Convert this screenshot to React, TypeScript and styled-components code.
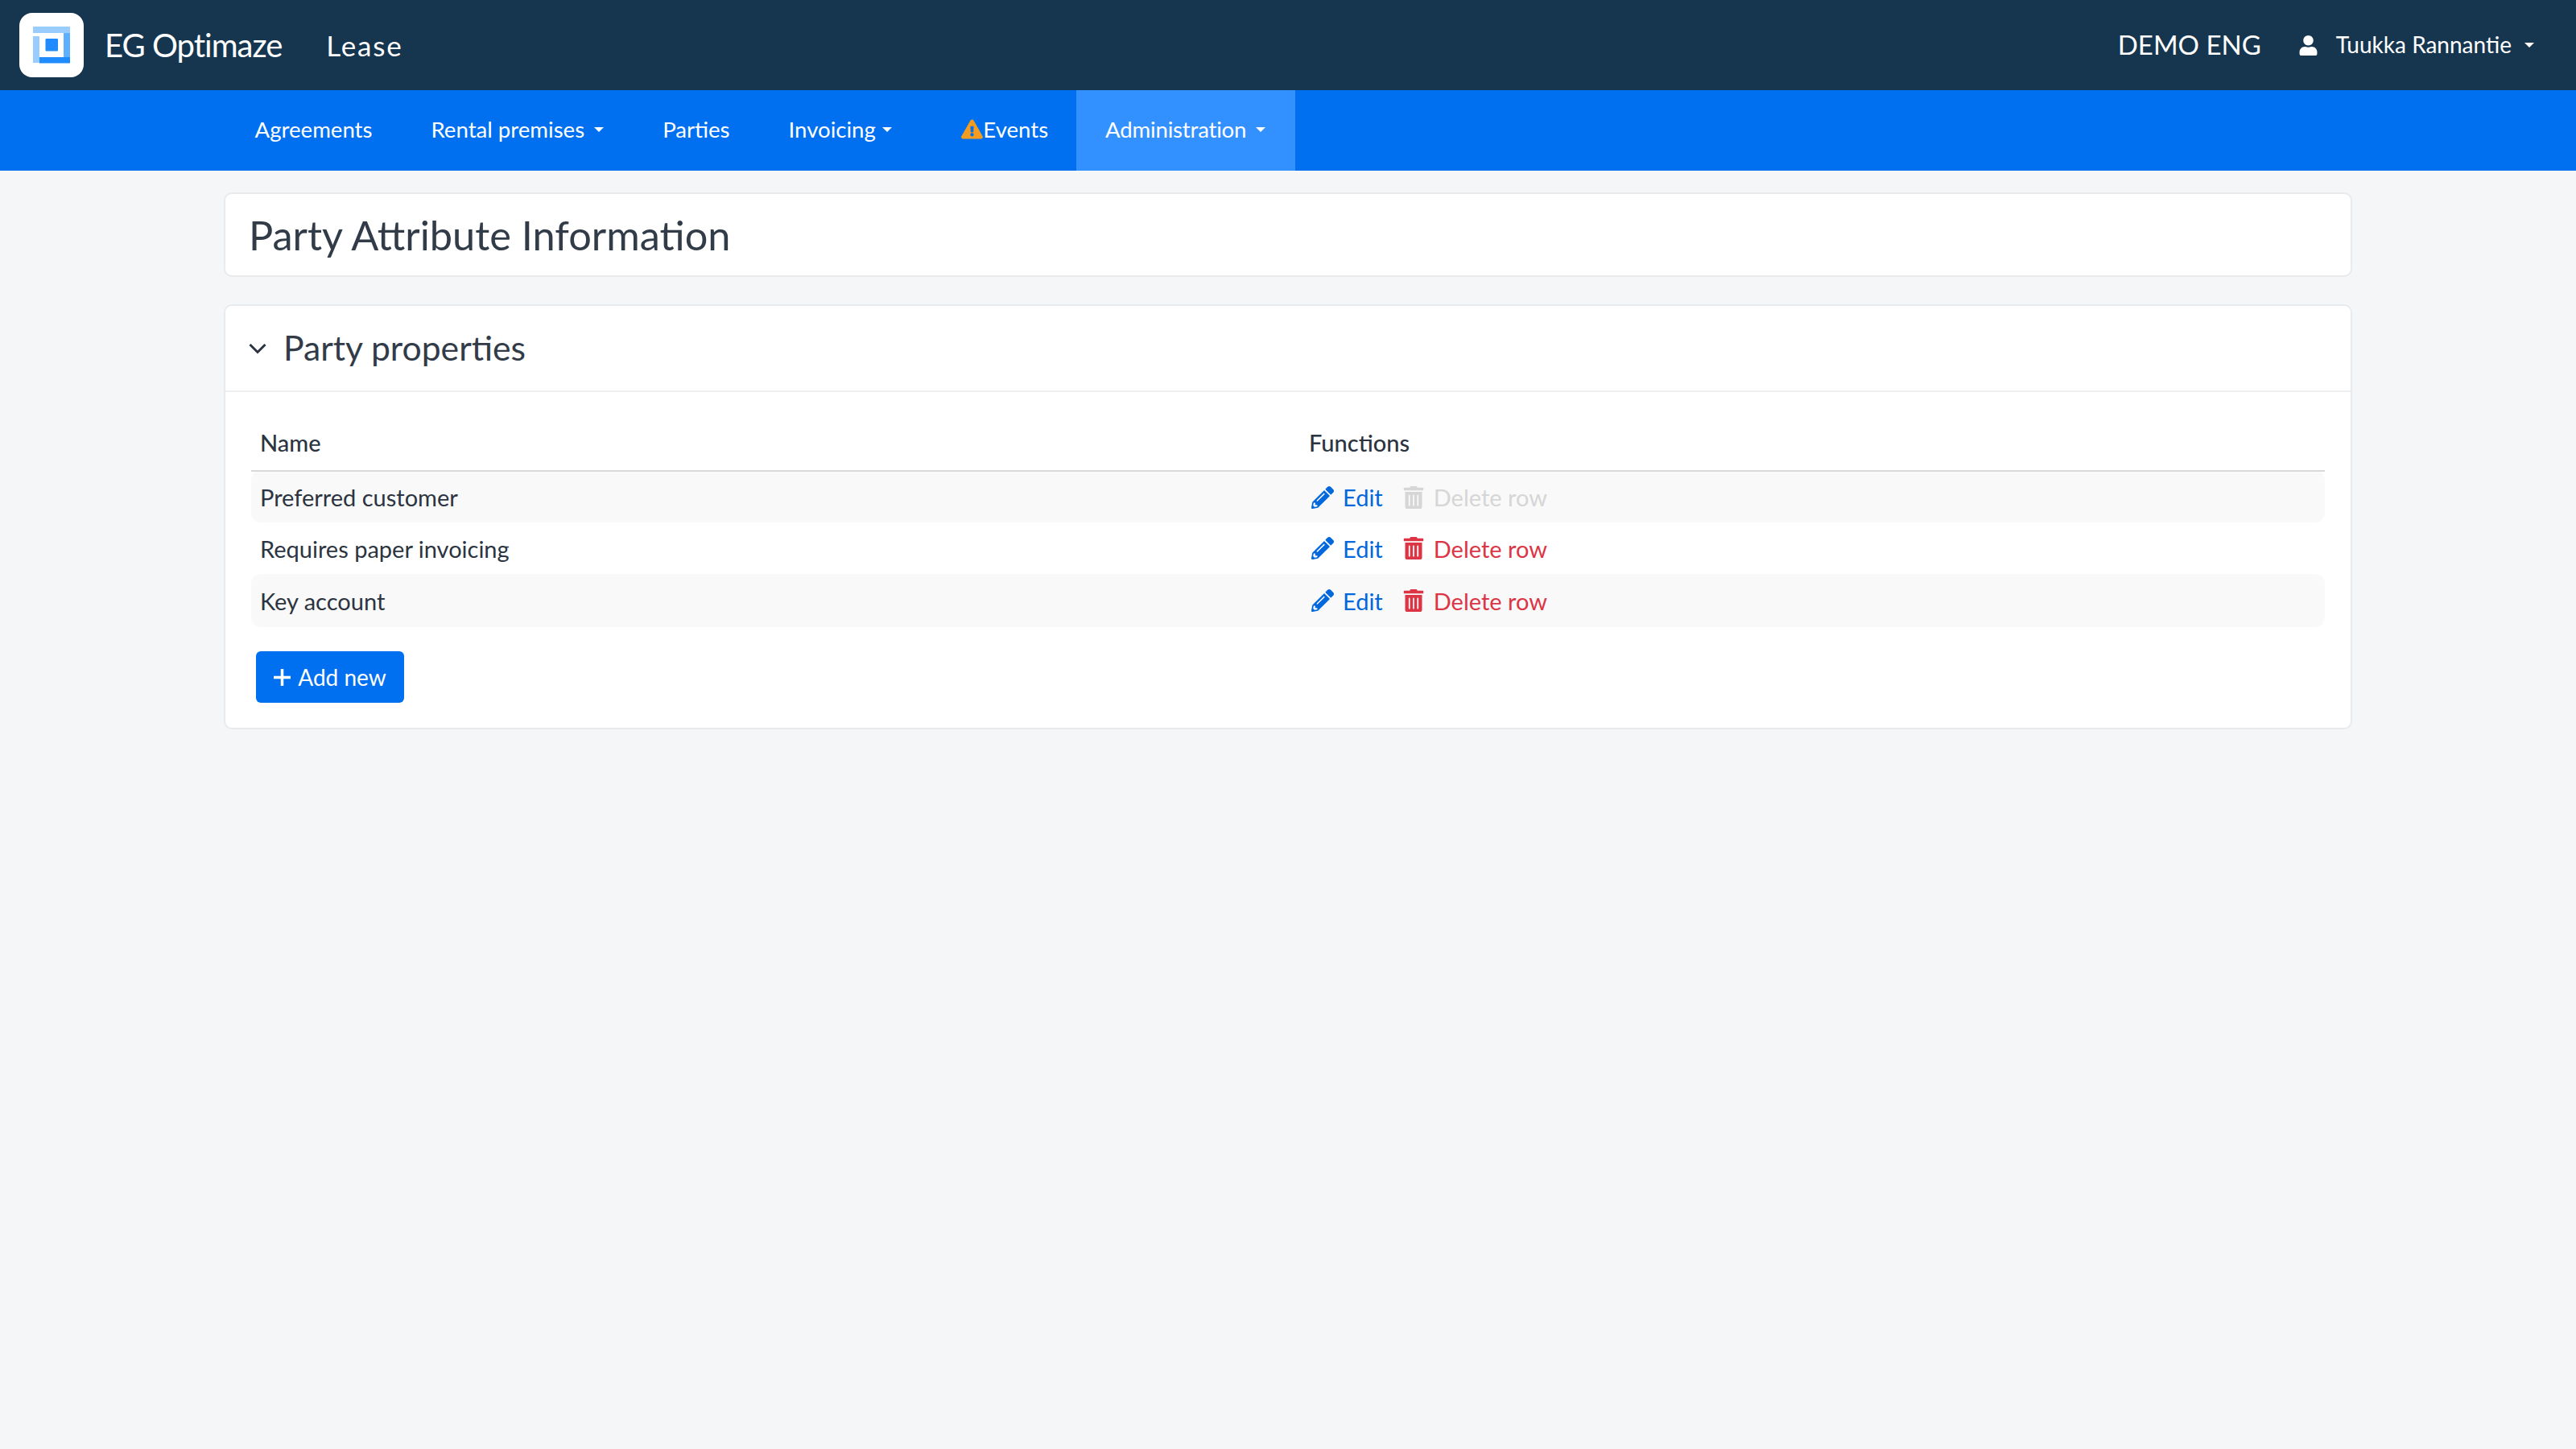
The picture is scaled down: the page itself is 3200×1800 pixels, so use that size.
import React from "react";
import styled, { createGlobalStyle } from "styled-components";
import { FaExclamationTriangle, FaPencilAlt, FaTrashAlt, FaUser } from "react-icons/fa";

const GlobalStyle = createGlobalStyle`
	html, body {
		margin: 0;
		padding: 0;
		background: #f5f6f8;
		font-family: "Lato", "Noto Sans", sans-serif;
		color: #2b3440;
	}
	* {
		box-sizing: border-box;
	}
`;

const TopBar = styled.header`
	height: 112px;
	background: #163650;
	color: #fff;
	display: flex;
	align-items: center;
	padding: 0 52px 0 24px;
`;

const LogoBox = styled.div`
	width: 80px;
	height: 80px;
	border-radius: 16px;
	background: #fff;
	display: flex;
	align-items: center;
	justify-content: center;
	margin-right: 26px;
`;

const Brand = styled.span`
	font-size: 40px;
	letter-spacing: -1px;
	margin-right: 55px;
`;

const Product = styled.span`
	font-size: 35px;
	letter-spacing: 1.8px;
`;

const TopRight = styled.div`
	margin-left: auto;
	display: flex;
	align-items: center;
`;

const Tenant = styled.span`
	font-size: 33px;
	margin-right: 46px;
	padding-bottom: 2px;
`;

const UserName = styled.span`
	font-size: 28px;
	margin: 0 16px 0 22px;
	padding-bottom: 2px;
	display: inline-flex;
	align-items: center;
`;

const Caret = styled.i<{ $gap?: number }>`
	display: inline-block;
	width: 0;
	height: 0;
	margin-left: ${(p) => p.$gap ?? 12}px;
	border-left: 6px solid transparent;
	border-right: 6px solid transparent;
	border-top: 6px solid #fff;
`;

const NavBar = styled.nav`
	height: 100px;
	background: #0070f0;
	display: flex;
	padding-left: 280px;
`;

const NavItem = styled.a<{ $active?: boolean }>`
	display: flex;
	align-items: center;
	padding: 0 36.5px 3px;
	color: #fff;
	font-size: 27.6px;
	letter-spacing: ${(p) => (p.$active ? "-0.2px" : "0")};
	background: ${(p) => (p.$active ? "#3390ff" : "transparent")};
`;

const EventsItem = styled(NavItem)`
	padding-left: 50px;
	padding-right: 34.5px;
	svg {
		color: #f39c1f;
		font-size: 27px;
	}
`;

const Main = styled.main`
	width: 2644px;
	margin: 27px auto 0;
	display: flex;
	flex-direction: column;
	gap: 34px;
`;

const Card = styled.section`
	background: #fff;
	border: 2px solid #e9eaec;
	border-radius: 10px;
`;

const TitleCard = styled(Card)`
	height: 105px;
	display: flex;
	align-items: center;
	padding: 0 29px;
`;

const Title = styled.h1`
	margin: 0;
	font-size: 50.500px;
	font-weight: 400;
	color: #323b48;
`;

const SectionHead = styled.div`
	height: 107px;
	display: flex;
	align-items: center;
	padding: 0 29px;
	border-bottom: 2px solid #eeeff0;
`;

const Chevron = styled.svg`
	width: 22px;
	height: 14px;
	margin-right: 21px;
`;

const SectionTitle = styled.h2`
	margin: 0;
	padding-bottom: 2px;
	font-size: 42.700px;
	font-weight: 400;
	color: #323b48;
`;

const SectionBody = styled.div`
	padding: 32px 32px 31px;
`;

const Table = styled.table`
	width: 100%;
	border-collapse: collapse;
	font-size: 29px;
`;

const HeadCell = styled.th<{ $width?: string }>`
	width: ${(p) => p.$width ?? "auto"};
	height: 66px;
	padding: 0 11px 5px;
	text-align: left;
	font-weight: 500;
	border-bottom: 2px solid #d9d9d9;
`;

const Row = styled.tr<{ $striped?: boolean }>`
	height: 64px;
	background: ${(p) => (p.$striped ? "#f9f9f9" : "#fff")};
	&:last-child {
		height: 66px;
	}
	td:first-child {
		border-radius: 12px 0 0 12px;
	}
	td:last-child {
		border-radius: 0 12px 12px 0;
	}
`;

const Cell = styled.td`
	padding: 0 11px;
`;

const Actions = styled.div`
	display: flex;
	align-items: center;
	padding-left: 3px;
	gap: 24px;
`;

const Action = styled.a<{ $color: string }>`
	display: inline-flex;
	align-items: center;
	gap: 11px;
	color: ${(p) => p.$color};
	svg {
		font-size: 28px;
	}
`;

const AddButton = styled.button`
	margin: 30px 0 0 6px;
	width: 184px;
	height: 64px;
	border: 0;
	border-radius: 6px;
	background: #0070f0;
	color: #fff;
	font: inherit;
	font-size: 28px;
	display: flex;
	align-items: center;
	justify-content: center;
	gap: 9px;
`;

const Logo = () => (
	<svg width="46" height="46" viewBox="0 0 46 46">
		<rect x="0" y="0" width="46" height="8" fill="#99ccff" />
		<rect x="0" y="12" width="8" height="33" fill="#99ccff" />
		<rect x="38" y="8" width="8" height="30" fill="#5cb0ff" />
		<rect x="8" y="38" width="38" height="7.5" fill="#1f8bff" />
		<rect x="15.500" y="15" width="15.500" height="15.500" rx="1" fill="#1f8bff" />
	</svg>
);

const PlusIcon = () => (
	<svg width="21" height="21" viewBox="0 0 21 21">
		<path d="M10.500 0v21M0 10.500h21" stroke="#fff" strokeWidth="3.500" fill="none" />
	</svg>
);

const rows = [
	{ name: "Preferred customer", locked: true },
	{ name: "Requires paper invoicing", locked: false },
	{ name: "Key account", locked: false },
];

const App = () => {
	return (
		<>
			<GlobalStyle />
			<TopBar>
				<LogoBox>
					<Logo />
				</LogoBox>
				<Brand>EG Optimaze</Brand>
				<Product>Lease</Product>
				<TopRight>
					<Tenant>DEMO ENG</Tenant>
					<FaUser size={25} />
					<UserName>Tuukka Rannantie</UserName>
					<Caret $gap={0} />
				</TopRight>
			</TopBar>
			<NavBar>
				<NavItem>Agreements</NavItem>
				<NavItem>Rental premises<Caret /></NavItem>
				<NavItem>Parties</NavItem>
				<NavItem>Invoicing<Caret $gap={8} /></NavItem>
				<EventsItem><FaExclamationTriangle />Events</EventsItem>
				<NavItem $active>Administration<Caret /></NavItem>
			</NavBar>
			<Main>
				<TitleCard>
					<Title>Party Attribute Information</Title>
				</TitleCard>
				<Card>
					<SectionHead>
						<Chevron viewBox="0 0 22 14">
							<path d="M1.500 2l9.500 9.500L20.500 2" stroke="#2b3440" strokeWidth="3" fill="none" />
						</Chevron>
						<SectionTitle>Party properties</SectionTitle>
					</SectionHead>
					<SectionBody>
						<Table>
							<thead>
								<tr>
									<HeadCell $width="1303px">Name</HeadCell>
									<HeadCell>Functions</HeadCell>
								</tr>
							</thead>
							<tbody>
								{rows.map((row, i) => (
									<Row key={row.name} $striped={i % 2 === 0}>
										<Cell>{row.name}</Cell>
										<Cell>
											<Actions>
												<Action $color="#0067dc"><FaPencilAlt />Edit</Action>
												<Action $color={row.locked ? "#d6d6d6" : "#dc3545"}><FaTrashAlt />Delete row</Action>
											</Actions>
										</Cell>
									</Row>
								))}
							</tbody>
						</Table>
						<AddButton><PlusIcon />Add new</AddButton>
					</SectionBody>
				</Card>
			</Main>
		</>
	);
};

export default App;
